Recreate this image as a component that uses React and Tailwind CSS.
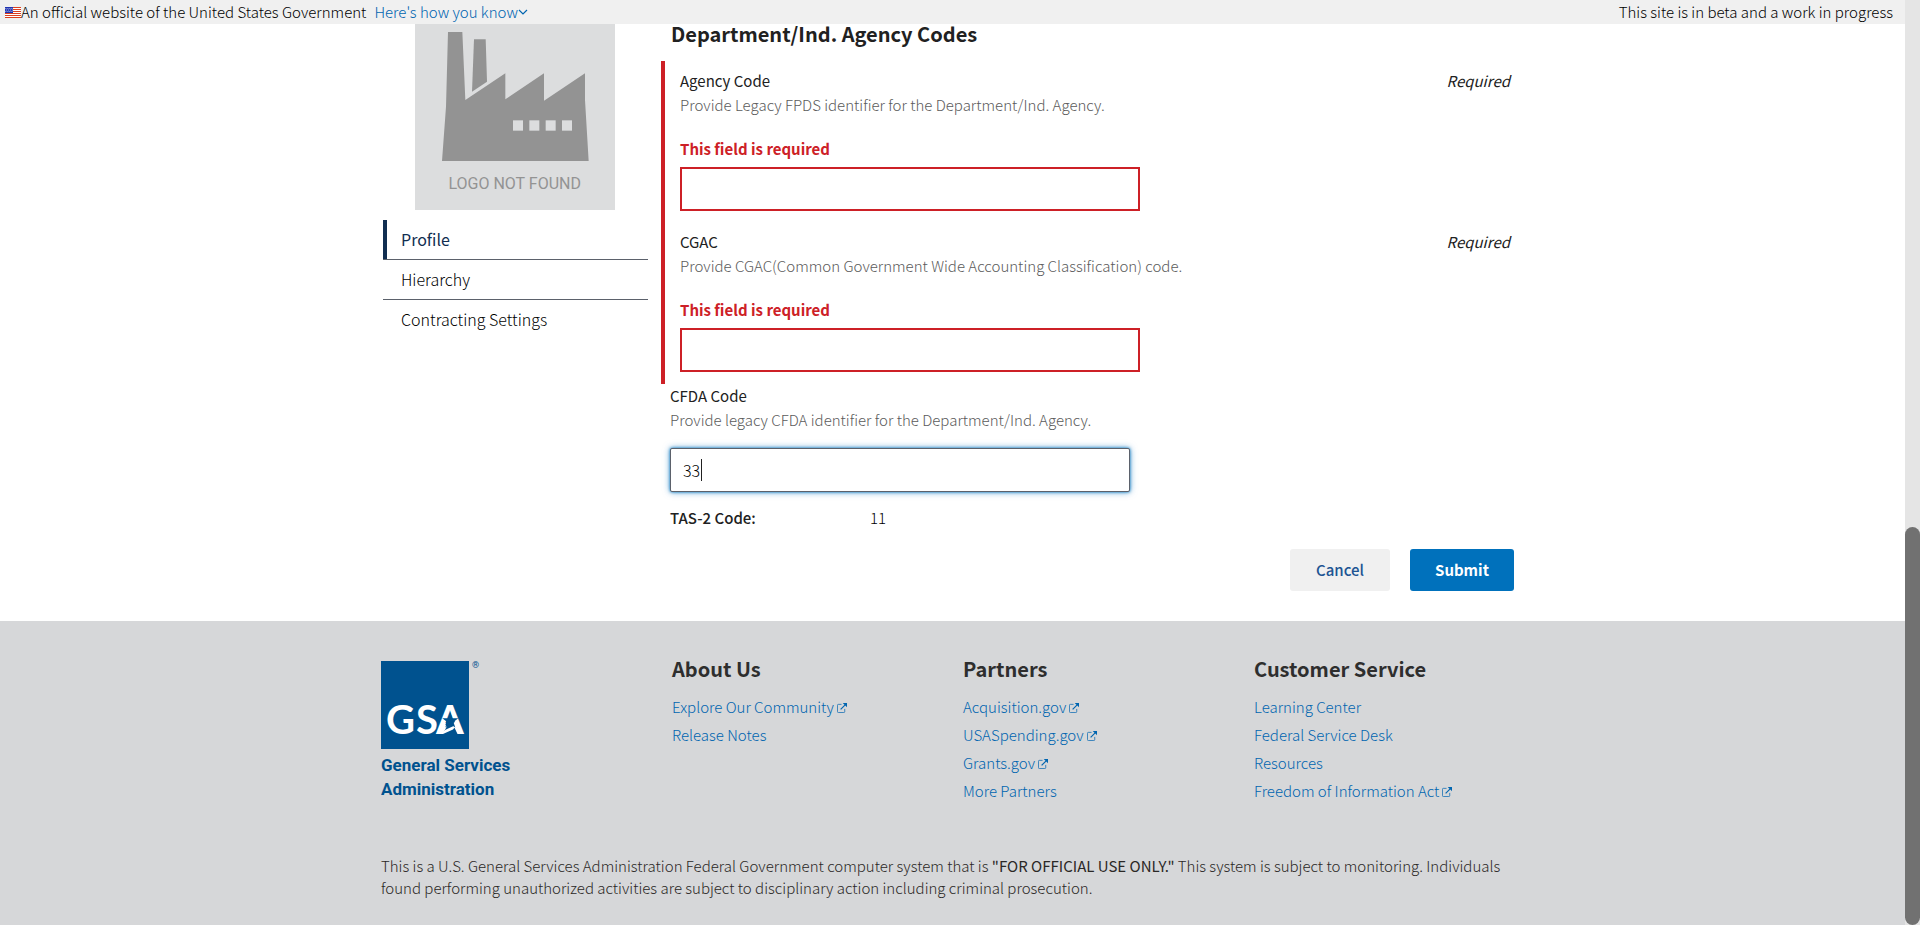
import { useState } from "react";

const externalIcon = (
  <svg className="ml-[3px] inline-block size-[10px] align-baseline" viewBox="0 0 11 11" fill="none" aria-hidden="true">
    <path d="M5 1.500H1.500a1 1 0 0 0-1 1v7a1 1 0 0 0 1 1h6a1 1 0 0 0 1-1V6.500" stroke="currentColor" strokeWidth="0.800" />
    <path d="M4 7L9 2" stroke="currentColor" strokeWidth="1.300" />
    <path d="M6.300 0H11V4.700L9.400 3.100L7.900 1.600Z" fill="currentColor" />
  </svg>
);

const footerColumns = [
  {
    title: "About Us",
    links: [
      { label: "Explore Our Community", external: true },
      { label: "Release Notes" },
    ],
  },
  {
    title: "Partners",
    links: [
      { label: "Acquisition.gov", external: true },
      { label: "USASpending.gov", external: true },
      { label: "Grants.gov", external: true },
      { label: "More Partners" },
    ],
  },
  {
    title: "Customer Service",
    links: [
      { label: "Learning Center" },
      { label: "Federal Service Desk" },
      { label: "Resources" },
      { label: "Freedom of Information Act", external: true },
    ],
  },
];

function Flag() {
  return (
    <svg className="h-[11px] w-4" viewBox="0 0 16 11" aria-hidden="true">
      <rect width="16" height="11" fill="#fff" />
      {[0, 2, 4, 6, 8, 10].map((y) => (
        <rect key={y} y={y} width="16" height="1" fill="#db3e1f" />
      ))}
      <rect width="8" height="6" fill="#1e33b1" />
      {[1, 3, 5, 7].map((x) => (
        <g key={x} fill="#fff">
          <rect x={x - 0.500} y="1" width="0.800" height="0.800" />
          <rect x={x - 0.100} y="2.600" width="0.800" height="0.800" />
          <rect x={x - 0.500} y="4.200" width="0.800" height="0.800" />
        </g>
      ))}
    </svg>
  );
}

function TopBar() {
  return (
    <header className="flex h-6 items-center bg-[#f0f0f0] pr-3 pl-[5px] text-[15px] leading-6 font-light text-black">
      <Flag />
      <span>An official website of the United States Government</span>
      <button type="button" className="ml-2 flex items-center text-[#0065b0]">
        Here's how you know
        <svg className="h-[6px] w-[10px]" viewBox="0 0 10 6" fill="none" aria-hidden="true">
          <path d="M1 1l4 4l4-4" stroke="currentColor" strokeWidth="1.200" />
        </svg>
      </button>
      <span className="ml-auto">This site is in beta and a work in progress</span>
    </header>
  );
}

function LogoPlaceholder() {
  return (
    <svg className="mx-auto h-[186px] w-[200px]" viewBox="135 72 600 558" role="img" aria-label="Logo not found">
      <rect x="135" y="72" width="600" height="558" fill="#dcddde" />
      <g fill="#939393">
        <path d="M234 96H277L286 300L406 220V298L522 220V302L645 220V300L656 483H216L228 320Z" />
        <path d="M312 118H347L351 245L306 275Z" />
      </g>
      <g fill="#dcddde">
        <rect x="429" y="361" width="30" height="31" />
        <rect x="478" y="361" width="30" height="31" />
        <rect x="527" y="361" width="30" height="31" />
        <rect x="576" y="361" width="30" height="31" />
      </g>
      <text x="434" y="568" textAnchor="middle" fontFamily="Roboto, sans-serif" fontSize="48" fill="#939393">
        LOGO NOT FOUND
      </text>
    </svg>
  );
}

function SideNav() {
  return (
    <nav className="mt-[10px] ml-[2px] w-[265px] text-base leading-[39px] font-light text-black">
      <a href="#profile" className="block border-b border-[#5b616b] font-normal text-[#112e51]">
        <span className="block border-l-4 border-[#112e51] pl-[14px]">Profile</span>
      </a>
      <a href="#hierarchy" className="block border-b border-[#5b616b] pl-[18px]">Hierarchy</a>
      <a href="#contracting" className="block pl-[18px]">Contracting Settings</a>
    </nav>
  );
}

function RequiredField({ id, label, hint }) {
  return (
    <div>
      <div className="flex justify-between">
        <label htmlFor={id} className="text-[15px]">{label}</label>
        <span className="text-[15px] italic">Required</span>
      </div>
      <p className="text-[15px] font-light text-[#5b5b5b]">{hint}</p>
      <p id={`${id}-error`} className="mt-5 text-[15px] font-bold text-[#cd2026]">This field is required</p>
      <input
        id={id}
        type="text"
        aria-invalid="true"
        aria-describedby={`${id}-error`}
        className="mt-[6px] block h-11 w-[460px] border-2 border-[#cd2026] bg-white px-3 outline-none"
      />
    </div>
  );
}

function CodesForm() {
  const [cfda, setCfda] = useState("33");
  return (
    <form className="ml-3 flex-1 pr-[10px] leading-6" onSubmit={(e) => e.preventDefault()}>
      <h2 className="ml-[10px] text-xl leading-5 font-bold">Department/Ind. Agency Codes</h2>
      <div className="mt-[17px] flex flex-col gap-[19px] border-l-4 border-[#cd2026] pt-2 pr-1 pb-3 pl-[15px]">
        <RequiredField id="agency" label="Agency Code" hint="Provide Legacy FPDS identifier for the Department/Ind. Agency." />
        <RequiredField id="cgac" label="CGAC" hint="Provide CGAC(Common Government Wide Accounting Classification) code." />
      </div>
      <div className="ml-[9px]">
        <label htmlFor="cfda" className="block text-[15px]">CFDA Code</label>
        <p className="text-[15px] font-light text-[#5b5b5b]">Provide legacy CFDA identifier for the Department/Ind. Agency.</p>
        <div className="relative mt-4 w-[460px]">
          <input
            id="cfda"
            type="text"
            value={cfda}
            onChange={(e) => setCfda(e.target.value)}
            className="block h-11 w-full rounded-xs border border-[#5b616b] bg-white px-3 text-base font-light text-black shadow-[0_0_3px_#0071bc,0_0_7px_#0071bc99] outline-none"
          />
          <span className="absolute top-[11px] left-[31px] h-[22px] w-px bg-[#212121]" aria-hidden="true" />
        </div>
        <dl className="mt-[14px] flex text-[15px]">
          <dt className="w-[200px] font-medium">TAS-2 Code:</dt>
          <dd className="font-light text-black">11</dd>
        </dl>
      </div>
      <div className="mt-[19px] flex justify-end gap-5 pb-[30px] text-[15px]">
        <button type="button" className="h-[42px] w-[100px] rounded-[3px] bg-[#f0f0f0] font-medium text-[#205493]">Cancel</button>
        <button type="submit" className="h-[42px] w-[104px] rounded-[3px] bg-[#0071bc] font-bold text-white">Submit</button>
      </div>
    </form>
  );
}

function GsaLogo() {
  return (
    <svg className="h-[140px] w-[140px]" viewBox="0 0 140 140" role="img" aria-label="GSA General Services Administration">
      <rect width="88" height="88" fill="#00528f" />
      <g fontFamily="Lato, sans-serif" fontWeight="700" fontSize="40" fill="#fff">
        <text x="5" y="73">G</text>
        <text x="35" y="73">S</text>
        <text x="55" y="73">A</text>
      </g>
      <path fill="#00528f" d="M65.500 60H73.500L77.500 70L80 76H61Z" />
      <path fill="#fff" d="M57 73L66 68L76 63.500L72 68.500L62 73ZM71.500 62.500L75.500 60L82.300 73H76.500Z" />
      <path fill="#fff" d="M57 73L61.500 62.500L66 65L64 69L60 73Z" />
      <path fill="#00528f" d="M69.300 51.500L71.200 57.200L77.300 57.200L72.400 60.900L74.300 66.600L69.300 63.100L64.300 66.600L66.200 60.900L61.300 57.200L67.400 57.200Z" />
      <g fontFamily="Roboto, sans-serif" fill="#00528f">
        <text x="91" y="7" fontSize="9">®</text>
        <text x="0" y="110" fontSize="17" fontWeight="700">General Services</text>
        <text x="0" y="134" fontSize="17" fontWeight="700">Administration</text>
      </g>
    </svg>
  );
}

function Footer() {
  return (
    <footer className="flex-1 bg-[#d6d7d9] pt-10">
      <div className="mx-auto max-w-[1143px]">
        <div className="grid grid-cols-4 gap-[21px]">
          <GsaLogo />
          {footerColumns.map((column) => (
            <section key={column.title}>
              <h3 className="text-xl leading-4 font-bold text-[#2e2e2e]">{column.title}</h3>
              <ul className="mt-4 text-[15px] leading-7 font-light text-[#0065b0]">
                {column.links.map((link) => (
                  <li key={link.label}>
                    <a href="#">{link.label}{link.external && externalIcon}</a>
                  </li>
                ))}
              </ul>
            </section>
          ))}
        </div>
        <p className="mt-[50px] pb-6 text-[15px] leading-[22px] font-light text-[#2b2826]">
          This is a U.S. General Services Administration Federal Government computer system that is{" "}
          <strong className="font-normal">"FOR OFFICIAL USE ONLY."</strong> This system is subject to monitoring.
          Individuals found performing unauthorized activities are subject to disciplinary action including criminal
          prosecution.
        </p>
      </div>
    </footer>
  );
}

export default function App() {
  return (
    <div className="flex min-h-screen bg-white font-['Noto_Sans_CJK_SC',sans-serif] text-[#212121]">
      <div className="flex min-w-0 flex-1 flex-col">
        <TopBar />
        <main className="mx-auto flex w-full max-w-[1143px]">
          <aside className="flex w-[268px] flex-col">
            <LogoPlaceholder />
            <SideNav />
          </aside>
          <CodesForm />
        </main>
        <Footer />
      </div>
      <div className="flex w-[15px] flex-col justify-end bg-[#e5e5e5]" aria-hidden="true">
        <div className="h-[43%] rounded-full bg-[#717171]" />
      </div>
    </div>
  );
}
